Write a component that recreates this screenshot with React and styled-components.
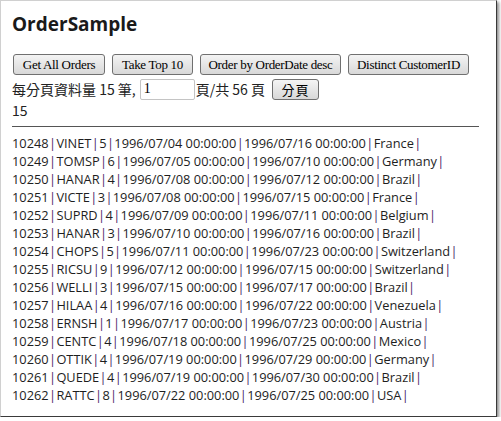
import React from 'react';
import styled, { createGlobalStyle } from 'styled-components';

const GlobalStyle = createGlobalStyle`
  html, body {
    margin: 0;
    padding: 0;
    background: #ffffff;
  }
`;

const Frame = styled.div`
  box-sizing: border-box;
  width: 497px;
  height: 417px;
  border-top: 1px solid #d0d0d0;
  border-left: 1px solid #d0d0d0;
  border-right: 1px solid #3a3a3a;
  border-bottom: 1px solid #3a3a3a;
  box-shadow: 2px 2px 3px rgba(0, 0, 0, 0.45);
  padding: 0 11px;
  overflow: hidden;
`;

const Title = styled.h2`
  margin: 10px 0 0;
  font-family: "Open Sans", sans-serif;
  font-size: 19px;
  line-height: 26px;
  font-weight: 700;
  color: #1a1a1a;
`;

const ButtonRow = styled.div`
  display: flex;
  gap: 7px;
  margin-top: 17px;
  padding-left: 1px;
`;

const Button = styled.button`
  box-sizing: border-box;
  flex-shrink: 0;
  width: ${p => p.$w}px;
  height: 21px;
  padding: 0;
  white-space: nowrap;
  border: 1px solid #707070;
  border-radius: 3px;
  background: linear-gradient(#f4f4f4, #e6e6e6 50%, #d8d8d8);
  font-family: "Liberation Serif", serif;
  font-size: 13px;
  letter-spacing: -0.3px;
  color: #000;
  cursor: pointer;
`;

const PagerRow = styled.div`
  display: flex;
  align-items: center;
  margin-top: 3px;
  font-family: "Noto Sans CJK TC", sans-serif;
  font-size: 14px;
  color: #222;
  height: 22px;
`;

const PageInput = styled.input`
  box-sizing: border-box;
  width: 55px;
  height: 21px;
  margin: 0 1px 0 4px;
  padding: 0 3px;
  border: 1px solid #c4c4c4;
  border-radius: 2px;
  font-family: "Liberation Serif", serif;
  font-size: 14px;
`;

const PagerButton = styled(Button)`
  margin-left: 7px;
  font-family: "Noto Sans CJK TC", sans-serif;
  font-size: 13px;
  letter-spacing: 1px;
`;

const Count = styled.div`
  margin-top: 0;
  font-family: "Noto Sans CJK TC", sans-serif;
  font-size: 14px;
  line-height: 20px;
  color: #222;
`;

const Rule = styled.hr`
  margin: 6px 6px 0 0;
  border: 0;
  border-top: 1px solid #555;
`;

const List = styled.div`
  margin-top: 7px;
  font-family: "Open Sans", sans-serif;
  font-size: 12.8px;
  line-height: 18px;
  color: #1e1e1e;
  white-space: nowrap;
`;

const Pipe = styled.span`
  color: #4a2266;
  margin: 0 0.4px;
`;

const orders = [
  ['10248', 'VINET', '5', '1996/07/04 00:00:00', '1996/07/16 00:00:00', 'France'],
  ['10249', 'TOMSP', '6', '1996/07/05 00:00:00', '1996/07/10 00:00:00', 'Germany'],
  ['10250', 'HANAR', '4', '1996/07/08 00:00:00', '1996/07/12 00:00:00', 'Brazil'],
  ['10251', 'VICTE', '3', '1996/07/08 00:00:00', '1996/07/15 00:00:00', 'France'],
  ['10252', 'SUPRD', '4', '1996/07/09 00:00:00', '1996/07/11 00:00:00', 'Belgium'],
  ['10253', 'HANAR', '3', '1996/07/10 00:00:00', '1996/07/16 00:00:00', 'Brazil'],
  ['10254', 'CHOPS', '5', '1996/07/11 00:00:00', '1996/07/23 00:00:00', 'Switzerland'],
  ['10255', 'RICSU', '9', '1996/07/12 00:00:00', '1996/07/15 00:00:00', 'Switzerland'],
  ['10256', 'WELLI', '3', '1996/07/15 00:00:00', '1996/07/17 00:00:00', 'Brazil'],
  ['10257', 'HILAA', '4', '1996/07/16 00:00:00', '1996/07/22 00:00:00', 'Venezuela'],
  ['10258', 'ERNSH', '1', '1996/07/17 00:00:00', '1996/07/23 00:00:00', 'Austria'],
  ['10259', 'CENTC', '4', '1996/07/18 00:00:00', '1996/07/25 00:00:00', 'Mexico'],
  ['10260', 'OTTIK', '4', '1996/07/19 00:00:00', '1996/07/29 00:00:00', 'Germany'],
  ['10261', 'QUEDE', '4', '1996/07/19 00:00:00', '1996/07/30 00:00:00', 'Brazil'],
  ['10262', 'RATTC', '8', '1996/07/22 00:00:00', '1996/07/25 00:00:00', 'USA'],
];

export default function App() {
  return (
    <>
      <GlobalStyle />
      <Frame>
        <Title>OrderSample</Title>
        <ButtonRow>
          <Button $w={92}>Get All Orders</Button>
          <Button $w={81}>Take Top 10</Button>
          <Button $w={141}>Order by OrderDate desc</Button>
          <Button $w={121}>Distinct CustomerID</Button>
        </ButtonRow>
        <PagerRow>
          每分頁資料量 15 筆,
          <PageInput defaultValue="1" />
          頁/共 56 頁
          <PagerButton $w={47}>分頁</PagerButton>
        </PagerRow>
        <Count>15</Count>
        <Rule />
        <List>
          {orders.map(row => (
            <div key={row[0]}>
              {row.map((cell, i) => (
                <React.Fragment key={i}>
                  {i > 0 && <Pipe>|</Pipe>}
                  {cell}
                </React.Fragment>
              ))}
              <Pipe>|</Pipe>
            </div>
          ))}
        </List>
      </Frame>
    </>
  );
}
